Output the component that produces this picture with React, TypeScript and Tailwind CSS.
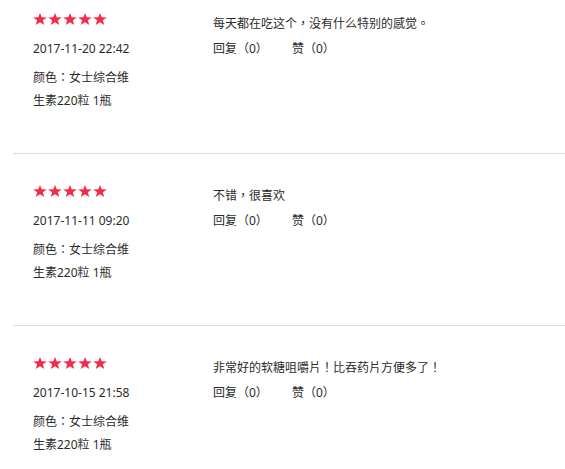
import React from "react";

type Review = {
  date: string;
  text: string;
};

const reviews: Review[] = [
  { date: "2017-11-20 22:42", text: "每天都在吃这个，没有什么特别的感觉。" },
  { date: "2017-11-11 09:20", text: "不错，很喜欢" },
  { date: "2017-10-15 21:58", text: "非常好的软糖咀嚼片！比吞药片方便多了！" },
];

function Star() {
  return (
    <svg width="14" height="12" viewBox="0 0 24 22" preserveAspectRatio="none" className="block">
      <polygon
        points="12,0 14.9,7.8 23.8,8.1 16.8,13.3 19.3,22 12,16.9 4.7,22 7.2,13.3 0.2,8.1 9.1,7.8"
        fill="#f52a4b"
      />
    </svg>
  );
}

function Item({ r, first }: { r: Review; first: boolean }) {
  return (
    <div
      className={`ml-[13px] border-b border-[#dddddd] pl-[20px] pb-[41px] flex ${
        first ? "pt-[13px]" : "pt-[31px]"
      }`}
    >
      <div className="w-[180px] shrink-0">
        <div className="flex gap-[1px] h-[12px]">
          <Star />
          <Star />
          <Star />
          <Star />
          <Star />
        </div>
        <div className="mt-[14px] leading-[20px]">{r.date}</div>
        <div className="mt-[7px] leading-[23px]">颜色：女士综合维</div>
        <div className="leading-[23px]">生素220粒 1瓶</div>
      </div>
      <div className="flex-1">
        <div className="mt-[1px] leading-[20px]">{r.text}</div>
        <div className="mt-[5px] leading-[20px] flex">
          <span className="w-[79px]">回复（0）</span>
          <span>赞（0）</span>
        </div>
      </div>
    </div>
  );
}

export default function App() {
  return (
    <div
      className="w-[565px] h-[469px] overflow-hidden bg-white text-[12px] text-[#2b2b2b]"
      style={{ fontFamily: '"Noto Sans", "Noto Sans CJK TC", "Noto Sans CJK SC", sans-serif' }}
    >
      {reviews.map((r, i) => (
        <Item key={i} r={r} first={i === 0} />
      ))}
    </div>
  );
}
